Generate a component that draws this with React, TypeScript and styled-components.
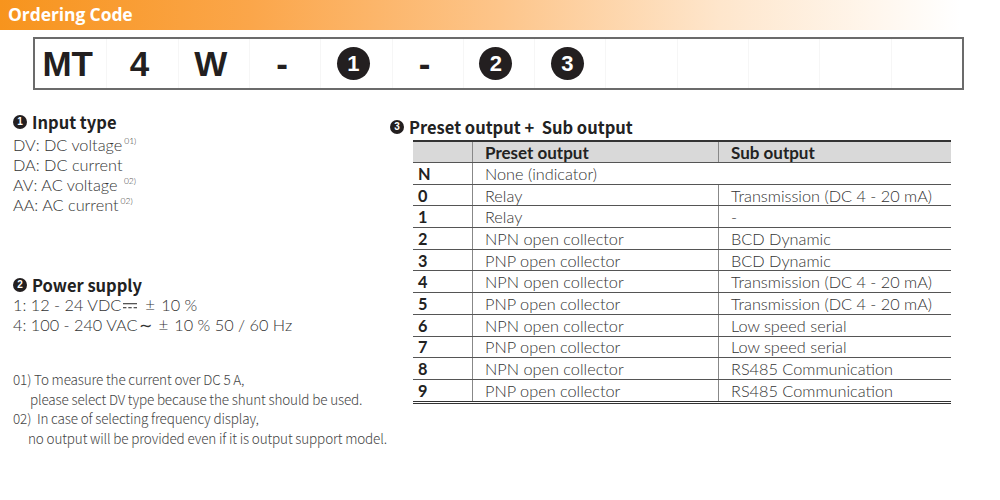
import React from 'react';
import styled, {createGlobalStyle} from 'styled-components';

const GlobalStyle = createGlobalStyle`
    html, body {
        margin: 0;
        padding: 0;
        background: #fff;
    }
    body {
        font-family: "Noto Sans CJK KR", "Noto Sans", sans-serif;
        color: #444;
    }
`;

const codeCells = ['MT', '4', 'W', '-', 1, '-', 2, 3, '', '', '', '', ''];

const inputTypes = [
    {text: 'DV: DC voltage', note: '01)'},
    {text: 'DA: DC current'},
    {text: 'AV: AC voltage ', note: '02)'},
    {text: 'AA: AC current', note: '02)'},
];

const rows = [
    {code: 'N', preset: 'None (indicator)', sub: null},
    {code: '0', preset: 'Relay', sub: 'Transmission (DC 4 - 20 mA)'},
    {code: '1', preset: 'Relay', sub: '-'},
    {code: '2', preset: 'NPN open collector', sub: 'BCD Dynamic'},
    {code: '3', preset: 'PNP open collector', sub: 'BCD Dynamic'},
    {code: '4', preset: 'NPN open collector', sub: 'Transmission (DC 4 - 20 mA)'},
    {code: '5', preset: 'PNP open collector', sub: 'Transmission (DC 4 - 20 mA)'},
    {code: '6', preset: 'NPN open collector', sub: 'Low speed serial'},
    {code: '7', preset: 'PNP open collector', sub: 'Low speed serial'},
    {code: '8', preset: 'NPN open collector', sub: 'RS485 Communication'},
    {code: '9', preset: 'PNP open collector', sub: 'RS485 Communication'},
];

// DC symbol: solid bar over a dashed bar
const DcIcon = () => (
    <SymbolSvg width="14" height="8" viewBox="0 0 14 8">
        <rect x="0" y="1" width="14" height="1.3" fill="#555"/>
        <rect x="0" y="5" width="3.4" height="1.3" fill="#555"/>
        <rect x="5.3" y="5" width="3.4" height="1.3" fill="#555"/>
        <rect x="10.6" y="5" width="3.4" height="1.3" fill="#555"/>
    </SymbolSvg>
);

const App = () => {
    return (
        <Page>
            <GlobalStyle/>
            <TitleBar>Ordering Code</TitleBar>
            <CodeBox>
                {codeCells.map((c, i) => (
                    <CodeCell key={i}>
                        {typeof c === 'number' ? <Badge size={33}>{c}</Badge> : c}
                    </CodeCell>
                ))}
            </CodeBox>
            <Body>
                <LeftColumn>
                    <SectionTitle gap={3}>
                        <Badge size={14}>1</Badge>
                        Input type
                    </SectionTitle>
                    {inputTypes.map((t) => (
                        <Line key={t.text}>
                            {t.text}
                            {t.note && <Sup>{t.note}</Sup>}
                        </Line>
                    ))}
                    <SectionTitle spaced={true}>
                        <Badge size={14}>2</Badge>
                        Power supply
                    </SectionTitle>
                    <Line>1: 12 - 24 VDC<DcIcon/><Pm>±</Pm>10 %</Line>
                    <Line>4: 100 - 240 VAC<Tilde>∼</Tilde><Pm>±</Pm>10 % 50 / 60 Hz</Line>
                    <Notes>
                        <Note>01) To measure the current over DC 5 A,</Note>
                        <Note indent={17}>please select DV type because the shunt should be used.</Note>
                        <Note>02)&nbsp; In case of selecting frequency display,</Note>
                        <Note indent={15}>no output will be provided even if it is output support model.</Note>
                    </Notes>
                </LeftColumn>
                <RightColumn>
                    <SectionTitle>
                        <Badge size={14}>3</Badge>
                        Preset output +&nbsp; Sub output
                    </SectionTitle>
                    <Table>
                        <thead>
                            <tr>
                                <HeadCell/>
                                <HeadCell>Preset output</HeadCell>
                                <HeadCell>Sub output</HeadCell>
                            </tr>
                        </thead>
                        <tbody>
                            {rows.map((r) => (
                                <tr key={r.code}>
                                    <CodeTd>{r.code}</CodeTd>
                                    {r.sub === null ? (
                                        <Td colSpan={2}>{r.preset}</Td>
                                    ) : (
                                        <>
                                            <Td>{r.preset}</Td>
                                            <Td>{r.sub}</Td>
                                        </>
                                    )}
                                </tr>
                            ))}
                        </tbody>
                    </Table>
                </RightColumn>
            </Body>
        </Page>
    );
};

export default App;

const Page = styled.div`
    width: 1000px;
    height: 500px;
    overflow: hidden;
`;

const TitleBar = styled.div`
    height: 30px;
    line-height: 29px;
    padding-left: 8px;
    font-family: "Open Sans", "Noto Sans", sans-serif;
    font-weight: 700;
    font-size: 17.5px;
    letter-spacing: -0.1px;
    color: #fff;
    background: linear-gradient(90deg, #f7941d 0%, #fba64a 25%, #fdc58a 50%, #fee6cc 72%, #fff7ee 88%, #ffffff 96%);
`;

const CodeBox = styled.div`
    margin: 7px 0 0 33px;
    width: 931px;
    height: 53px;
    box-sizing: border-box;
    border: 2px solid #6b6b6b;
    display: grid;
    grid-template-columns: repeat(13, 1fr);
`;

const CodeCell = styled.div`
    display: flex;
    align-items: center;
    justify-content: center;
    padding-right: 6px;
    font-family: "Liberation Sans", Arial, sans-serif;
    font-weight: 700;
    font-size: 35px;
    color: #231f20;
    & + & {
        border-left: 1px solid rgba(0, 0, 0, 0.035);
    }
`;

const Badge = styled.span<{size: number}>`
    display: inline-flex;
    align-items: center;
    justify-content: center;
    flex: none;
    width: ${({size}) => size}px;
    height: ${({size}) => size}px;
    border-radius: 50%;
    background: #231f20;
    color: #fff;
    font-family: "Liberation Sans", Arial, sans-serif;
    font-weight: 700;
    font-size: ${({size}) => Math.round(size * 0.68)}px;
    line-height: 1;
`;

const Body = styled.div`
    display: flex;
    padding: 22px 0 0 13px;
`;

const LeftColumn = styled.div`
    width: 377px;
    display: flex;
    flex-direction: column;
`;

const RightColumn = styled.div`
    width: 561px;
    display: flex;
    flex-direction: column;
    padding-top: 5px;
`;

const SectionTitle = styled.div<{spaced?: boolean, gap?: number}>`
    display: flex;
    align-items: center;
    gap: 5px;
    margin-top: ${({spaced}) => (spaced ? '60px' : '0')};
    margin-bottom: ${({gap}) => gap || 0}px;
    font-weight: 700;
    font-size: 16.5px;
    line-height: 20px;
    color: #222;
`;

const Line = styled.div`
    font-family: Lato, "Noto Sans CJK KR", sans-serif;
    font-size: 16.3px;
    line-height: 20px;
    height: 20px;
    font-weight: 300;
    color: #333;
    white-space: nowrap;
`;

const Sup = styled.span`
    font-size: 8.5px;
    line-height: 0;
    position: relative;
    top: -7px;
    margin-left: 2px;
`;

const SymbolSvg = styled.svg`
    margin: 0 3px 1px 2px;
    vertical-align: middle;
`;

const Tilde = styled.span`
    margin: 0 1px 0 2px;
`;

const Pm = styled.span`
    font-size: 17px;
    margin: 0 6px 0 5px;
`;

const Notes = styled.div`
    margin-top: 35px;
    display: flex;
    flex-direction: column;
`;

const Note = styled.div<{indent?: number}>`
    padding-left: ${({indent}) => indent || 0}px;
    font-size: 13.5px;
    line-height: 19.5px;
    letter-spacing: -0.15px;
    font-weight: 300;
    color: #444;
    white-space: nowrap;
`;

const Table = styled.table`
    margin: 3px 0 0 23px;
    width: 538px;
    border-collapse: collapse;
    border-top: 2px solid #333;
    border-bottom: 3px double #333;
    font-family: Lato, "Noto Sans CJK KR", sans-serif;
    font-size: 16.3px;
`;

const HeadCell = styled.th`
    height: 20px;
    background: #d9d9d9;
    text-align: left;
    padding: 0 12px;
    font-weight: 700;
    font-size: 17px;
    line-height: 19px;
    color: #222;
    border-bottom: 1px solid #555;
    & + & {
        border-left: 1px solid #888;
    }
    &:first-child {
        width: 35px;
    }
    &:nth-child(2) {
        width: 221px;
    }
`;

const Td = styled.td`
    height: 20.7px;
    padding: 0 12px;
    font-weight: 300;
    color: #333;
    border-bottom: 1px solid #555;
    border-left: 1px solid #888;
    white-space: nowrap;
    line-height: 19px;
`;

const CodeTd = styled(Td)`
    border-left: none;
    padding-left: 5px;
    font-weight: 700;
    color: #222;
`;
